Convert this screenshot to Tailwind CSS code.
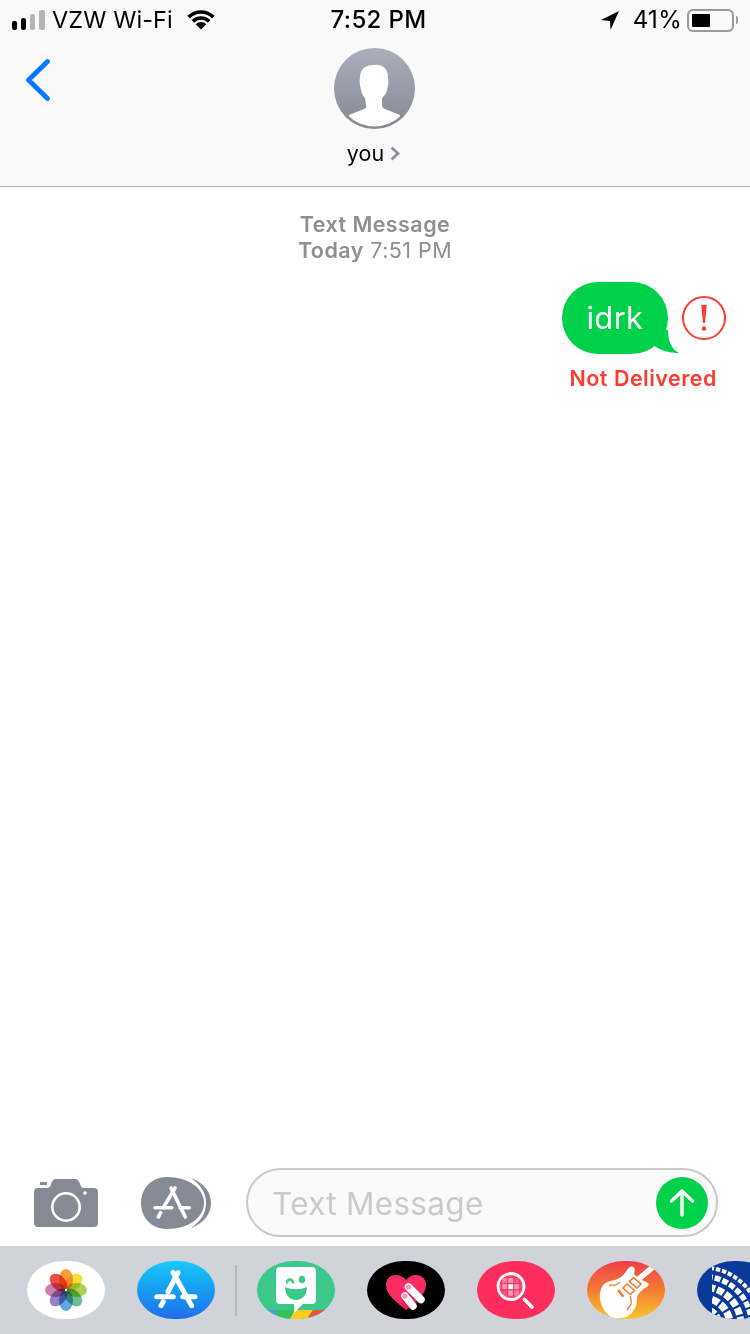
<!DOCTYPE html>
<html>
<head>
<meta charset="utf-8">
<script src="https://cdn.jsdelivr.net/npm/@tailwindcss/browser@4"></script>
</head>
<body class="bg-white">
<div class="w-[750px] h-[1334px] overflow-hidden flex flex-col bg-white [font-family:Inter,sans-serif]">

  <!-- Nav header -->
  <header class="h-[187px] shrink-0 bg-[#f9f9f9] border-b border-[#b2b2b2] flex flex-col">
    <div class="h-[40px] shrink-0 grid grid-cols-[1fr_auto_1fr] items-center text-black">
      <div class="flex items-center pl-[12px] h-[40px]">
        <div class="flex items-end gap-[4px] h-[20px]">
          <span class="w-[5px] h-[9px] rounded-[2px] bg-black"></span>
          <span class="w-[5px] h-[12px] rounded-[2px] bg-black"></span>
          <span class="w-[5px] h-[16px] rounded-[2px] bg-[#b4b4b4]"></span>
          <span class="w-[6px] h-[20px] rounded-[2px] bg-[#b4b4b4]"></span>
        </div>
        <span class="ml-[7px] text-[23.5px] leading-[40px] tracking-[0.1px]">VZW Wi-Fi</span>
        <svg class="ml-[14px]" width="28" height="20" viewBox="0 0 28 20"><path d="M14 19.500 L8.700 14.200 A7.500 7.500 0 0 1 19.300 14.200 Z" fill="#000"/><path d="M5.870 11.370 A11.500 11.500 0 0 1 22.130 11.370" fill="none" stroke="#000" stroke-width="3.600"/><path d="M1.630 7.130 A17.500 17.500 0 0 1 26.370 7.130" fill="none" stroke="#000" stroke-width="3.600"/></svg>
      </div>
      <div class="ml-[7px] text-[24px] leading-[40px] font-medium tracking-[0.35px] whitespace-nowrap">7:52 PM</div>
      <div class="flex items-center justify-end pr-[12px] h-[40px]">
        <svg width="18" height="19" viewBox="0 0 18 19"><path d="M18 0 L0 9 L9 10 L9.500 19 Z" fill="#000"/></svg>
        <span class="ml-[14px] text-[24px] leading-[40px] tracking-[0.3px]">41%</span>
        <div class="ml-[5px] w-[47px] h-[23px] border-2 border-[#9a9a9a] rounded-[6px] p-[3px]">
          <div class="w-[18px] h-full bg-black rounded-[1px]"></div>
        </div>
        <div class="ml-[2px] w-[2px] h-[8px] bg-[#9a9a9a] rounded-r-[2px]"></div>
      </div>
    </div>
    <div class="relative flex flex-col items-center pt-[8px]">
      <svg class="absolute left-[24px] top-[17px]" width="28" height="46" viewBox="0 0 28 46"><path d="M23.500 4.500 L4.500 23 L23.500 41.500" fill="none" stroke="#007aff" stroke-width="4.800" stroke-linecap="round" stroke-linejoin="round"/></svg>
      <svg class="mr-[1px]" width="81" height="81" viewBox="0 0 81 81">
        <defs>
          <linearGradient id="av" x1="0" y1="0" x2="0" y2="1"><stop offset="0" stop-color="#abafbc"/><stop offset="1" stop-color="#858994"/></linearGradient>
          <clipPath id="avc"><circle cx="40.500" cy="40.500" r="38"/></clipPath>
        </defs>
        <circle cx="40.500" cy="40.500" r="40.500" fill="url(#av)"/>
        <path clip-path="url(#avc)" d="M40 17 C49 16 54 21 54 30 C55 33 54 38 53 42 C52 46 50 48 48 50 L48 57 C48 59 49 60 51 61 C56 63 61 65 66 67 L67 81 L14 81 L15 67 C20 65 25 63 30 61 C32 60 33 59 32 57 L31 50 C29 48 28 46 27 42 C26 38 25 33 26 30 C26 21 31 17 40 17 Z" fill="#fff"/>
      </svg>
      <div class="flex items-center mt-[8px] h-[32px] mr-[3px]">
        <span class="text-[21.5px] leading-[32px] text-black">you</span>
        <svg class="ml-[6px] mt-[1px]" width="10" height="15" viewBox="0 0 10 15"><path d="M1.500 1.500 L8 7.500 L1.500 13.500" fill="none" stroke="#8a8f99" stroke-width="2.600"/></svg>
      </div>
    </div>
  </header>

  <!-- Conversation -->
  <main class="flex-1 min-h-0 flex flex-col">
    <div class="pt-[24px] flex flex-col items-center text-[#8e8e93] text-[21.5px] leading-[26px] tracking-[0.45px]">
      <div class="font-semibold">Text Message</div>
      <div><span class="font-semibold">Today</span> <span class="font-normal">7:51 PM</span></div>
    </div>
    <div class="mt-[19px] flex flex-col items-end">
      <div class="flex items-center pr-[24px]">
        <div class="relative w-[106px] h-[72px] rounded-[36px] bg-[#00d14a] flex items-center justify-center">
          <svg class="absolute left-[80px] top-[40px]" width="38" height="32" viewBox="0 0 38 32"><path d="M10 8 L26 8 C26 18 29 27 37 31 C29 31 20 29 13 24.500 Z" fill="#00d14a"/></svg>
          <span class="relative text-white text-[31px] leading-[72px] tracking-[0.3px]">idrk</span>
        </div>
        <div class="ml-[14px] w-[44px] h-[44px] rounded-full border-2 border-[#ff3b30] flex items-center justify-center">
          <svg width="8" height="26" viewBox="0 0 8 26"><path d="M1.200 0 L6.800 0 L5 18 L3 18 Z" fill="#ff3b30"/><circle cx="4" cy="23.500" r="2.200" fill="#ff3b30"/></svg>
        </div>
      </div>
      <div class="mt-[11px] pr-[33px] text-[#ff3b30] text-[21.5px] leading-[26px] font-semibold tracking-[0.5px]">Not Delivered</div>
    </div>
  </main>

  <!-- Compose bar -->
  <div class="h-[78px] shrink-0 flex items-center pl-[34px] pr-[32px] pb-[9px]">
    <svg width="64" height="48" viewBox="0 0 64 48">
      <path d="M6 3 L13 3 L13 6 L6 6 Z" fill="#858b94"/>
      <path d="M4 9 L13 9 C15 9 16 8 17 5 C18 2 19 0 22 0 L41 0 C44 0 45 2 46 5 C47 8 48 9 50 9 L60 9 C62.500 9 64 10.500 64 13 L64 44 C64 46.500 62.500 48 60 48 L4 48 C1.500 48 0 46.500 0 44 L0 13 C0 10.500 1.500 9 4 9 Z" fill="#858b94"/>
      <circle cx="32" cy="28" r="13.700" fill="none" stroke="#fff" stroke-width="2.600"/>
      <circle cx="51" cy="14" r="1.800" fill="#fff"/>
    </svg>
    <svg class="ml-[43px]" width="70" height="52" viewBox="0 0 70 52">
      <path d="M26 0 C48 0 63 12 63 26 C63 40 48 52 26 52 C10 52 0 40 0 26 C0 12 10 0 26 0 Z" fill="#858b94"/>
      <path d="M50 1 C63 6 70 15 70 26 C70 37 63 46 50 51 C60 44 65 36 65 26 C65 16 60 8 50 1 Z" fill="#858b94"/>
      <g fill="none" stroke="#fff" stroke-width="3.600" stroke-linecap="round">
        <path d="M30 11 L44.300 40"/>
        <path d="M34 11 L22.300 30.700"/>
        <path d="M14 30.700 L30.700 30.700"/>
        <path d="M39 30.700 L48.300 30.700"/>
        <path d="M19.700 35.700 L17.300 40"/>
      </g>
    </svg>
    <div class="ml-[35px] w-[472px] h-[69px] rounded-[35px] border-2 border-[#c8c8cc] bg-[#fafafa] flex items-center justify-between pl-[24px] pr-[8px]">
      <span class="pt-[1px] text-[31.5px] leading-[65px] tracking-[0.3px] text-[#c9c9ce]">Text Message</span>
      <div class="w-[52px] h-[52px] rounded-full bg-[#00d14a] flex items-center justify-center">
        <svg width="26" height="28" viewBox="0 0 26 28"><path d="M13 26 L13 2 M2.500 12 L13 2 L23.500 12" fill="none" stroke="#fff" stroke-width="3.400" stroke-linecap="round" stroke-linejoin="round"/></svg>
      </div>
    </div>
  </div>

  <!-- App tray -->
  <div class="h-[88px] shrink-0 bg-[#d0d3da] flex items-center pl-[27px] gap-[32px] overflow-hidden">
    <!-- Photos -->
    <div class="w-[78px] h-[58px] shrink-0 rounded-[37px/29px] bg-white flex items-center justify-center">
      <svg width="42" height="42" viewBox="-21 -21 42 42">
        <g opacity="0.92">
          <ellipse class="mix-blend-multiply" cx="0" cy="-10.500" rx="7" ry="10.500" fill="#f89a2c"/>
          <ellipse class="mix-blend-multiply" cx="0" cy="-10.500" rx="7" ry="10.500" fill="#f5dc25" transform="rotate(45)"/>
          <ellipse class="mix-blend-multiply" cx="0" cy="-10.500" rx="7" ry="10.500" fill="#a6cf44" transform="rotate(90)"/>
          <ellipse class="mix-blend-multiply" cx="0" cy="-10.500" rx="7" ry="10.500" fill="#62b98b" transform="rotate(135)"/>
          <ellipse class="mix-blend-multiply" cx="0" cy="-10.500" rx="7" ry="10.500" fill="#4fa3dd" transform="rotate(180)"/>
          <ellipse class="mix-blend-multiply" cx="0" cy="-10.500" rx="7" ry="10.500" fill="#8d79c0" transform="rotate(225)"/>
          <ellipse class="mix-blend-multiply" cx="0" cy="-10.500" rx="7" ry="10.500" fill="#c776ae" transform="rotate(270)"/>
          <ellipse class="mix-blend-multiply" cx="0" cy="-10.500" rx="7" ry="10.500" fill="#ee3f36" transform="rotate(315)"/>
        </g>
        <circle r="1.200" fill="#fff"/>
      </svg>
    </div>
    <!-- App Store -->
    <div class="w-[78px] h-[58px] shrink-0 rounded-[37px/29px] bg-gradient-to-b from-[#1cc8fb] to-[#1f6eea]">
      <svg width="78" height="58" viewBox="0 0 78 58">
        <g fill="none" stroke="#fff" stroke-width="5" stroke-linecap="round">
          <path d="M36 11.500 L54.700 44.700"/>
          <path d="M41 11.500 L31 31"/>
          <path d="M19.700 35.700 L36.300 35.700"/>
          <path d="M45.700 35.700 L58 35.700"/>
          <path d="M26.300 40.700 L24 44.700"/>
        </g>
      </svg>
    </div>
    <div class="w-[2px] h-[51px] shrink-0 -mx-[12px] bg-[#b3b6bc]"></div>
    <!-- Bitmoji -->
    <div class="w-[78px] h-[58px] shrink-0 rounded-[37px/29px] bg-[#3ac98a] overflow-hidden">
      <svg width="78" height="58" viewBox="0 0 78 58">
        <path d="M4 49 L21 49 L16 58 L8 58 Z" fill="#4a9bdd"/>
        <path d="M21 49 L38 49 L33 58 L16 58 Z" fill="#35c05a"/>
        <path d="M38 49 L56 49 L50 58 L33 58 Z" fill="#fdcc1c"/>
        <path d="M56 49 L71 49 L62 58 L50 58 Z" fill="#e8543f"/>
        <path d="M23 6 L55 6 C58 6 59 8 59 11 L59 38 C59 41 58 43 55 43 L46 43 L37 52 L37 43 L23 43 C20 43 19 41 19 38 L19 11 C19 8 20 6 23 6 Z" fill="#fff"/>
        <path d="M30 21.500 C30.500 17.500 35 17.500 36 21.500" fill="none" stroke="#3ac98a" stroke-width="2.400" stroke-linecap="round"/>
        <ellipse cx="45" cy="18.500" rx="3.200" ry="3.800" fill="#3ac98a"/>
        <path d="M28 26 C34 29 44 29 50 26 C50 34 45 39 39 39 C33 39 28 34 28 26 Z" fill="#3ac98a"/>
      </svg>
    </div>
    <!-- Heart -->
    <div class="w-[78px] h-[58px] shrink-0 rounded-[37px/29px] bg-black">
      <svg width="78" height="58" viewBox="0 0 78 58">
        <path d="M39 49 C28 40 19 33 19 24 C19 17 24 14 29 14 C33 14 37 16 39 19 C41 16 45 14 49 14 C54 14 59 17 59 24 C59 33 50 40 39 49 Z" fill="#fc2d64"/>
        <path d="M44 30 L56 37 C52 42 46 46 39 49 L34 43 Z" fill="#c81d4d" opacity="0.600"/>
        <path d="M41.500 26 L54 38.500" stroke="#fff" stroke-width="7.500" stroke-linecap="round"/>
        <path d="M38 35 L46 45" stroke="#fff" stroke-width="7.500" stroke-linecap="round"/>
        <circle cx="41.500" cy="26" r="2.600" fill="#fa9ab8"/>
        <circle cx="38" cy="35" r="2.600" fill="#fa9ab8"/>
      </svg>
    </div>
    <!-- Search -->
    <div class="w-[78px] h-[58px] shrink-0 rounded-[37px/29px] bg-[#fd2d5c]">
      <svg width="78" height="58" viewBox="0 0 78 58">
        <defs><clipPath id="lens"><circle cx="34" cy="25.500" r="12"/></clipPath></defs>
        <circle cx="34" cy="25.500" r="12" fill="#f7557f"/>
        <g clip-path="url(#lens)">
          <rect x="25" y="23" width="5.500" height="5.500" fill="#fc9ab2"/>
          <rect x="31" y="17" width="5.500" height="5.500" fill="#fc9ab2"/>
          <rect x="37" y="23" width="5.500" height="5.500" fill="#fc9ab2"/>
          <rect x="31" y="29" width="5.500" height="5.500" fill="#fc9ab2"/>
          <rect x="37" y="29" width="5.500" height="5.500" fill="#fb7c9c"/>
          <rect x="25" y="17" width="5.500" height="5.500" fill="#fb7c9c"/>
          <rect x="31" y="23" width="5.500" height="5.500" fill="#fff"/>
          <path d="M18 16.500 L50 16.500 M18 22.700 L50 22.700 M18 28.800 L50 28.800 M24.700 8 L24.700 42 M30.800 8 L30.800 42 M36.800 8 L36.800 42 M42.800 8 L42.800 42" stroke="#fd2d5c" stroke-width="1"/>
        </g>
        <circle cx="34" cy="25.500" r="13" fill="none" stroke="#fff" stroke-width="2.800"/>
        <path d="M47.500 38.500 L55 46" stroke="#fff" stroke-width="3.600" stroke-linecap="round"/>
      </svg>
    </div>
    <!-- GarageBand -->
    <div class="w-[78px] h-[58px] shrink-0 rounded-[37px/29px] bg-gradient-to-b from-[#f03a47] via-[#f37a30] to-[#fbc52c] overflow-hidden">
      <svg width="78" height="58" viewBox="0 0 78 58">
        <path d="M41.300 7.300 C43 5.500 45 5 46.500 6 C48 7.500 48 10 47 13 L50 15.700 L64.700 3.300 L69 7.300 L54.700 19 C57 20 60 21 61.300 22.300 C62 24 61.500 25 59 26.500 C56 28 54 30 52 32.500 C50 35 50 37 49.700 40 C49.500 44 49 46 48 47.300 C46 51 43 54 39.700 55.700 C35 57.500 30 57.500 26.300 57 C21 55 17 50 14.700 44 C13 40 12.500 36 13 32.300 C14 27 15.500 24 18 22.300 C21 20 25 20 28 19 C31 18 34 16 36.300 14 C38 12 40 9 41.300 7.300 Z" fill="#fff"/>
        <path d="M46.500 16.500 L54 23 L50 27 L42.500 20.500 Z M40 23 L47.500 29.500 L43.500 33.500 L36 27 Z" fill="none" stroke="#f37a30" stroke-width="1.600"/>
        <path d="M31.300 29 L36.300 35.700" stroke="#f37a30" stroke-width="2.600" fill="none"/>
        <path d="M22 25 C25 22 27 26 29.500 23.500 C31 22 32 22 33 21" stroke="#f37a30" stroke-width="1.300" fill="none"/>
        <path d="M43 35 C44 38 45 41 44 43 C43 46 41 46 40 49" stroke="#f37a30" stroke-width="1.300" fill="none"/>
      </svg>
    </div>
    <!-- United -->
    <div class="w-[78px] h-[58px] shrink-0 rounded-[37px/29px] bg-[#0b3a9a] overflow-hidden">
      <svg width="78" height="58" viewBox="0 0 78 58">
        <defs><clipPath id="globe"><rect x="15" y="2" width="63" height="56"/></clipPath></defs>
        <g clip-path="url(#globe)" fill="none" stroke="#fff">
          <circle cx="6" cy="64" r="16" stroke-width="7" stroke-dasharray="7 2"/>
          <circle cx="6" cy="64" r="27" stroke-width="7.500" stroke-dasharray="7.500 2.200"/>
          <circle cx="6" cy="64" r="38" stroke-width="7" stroke-dasharray="7 2.200"/>
          <circle cx="6" cy="64" r="48.500" stroke-width="5.500" stroke-dasharray="6 2"/>
          <circle cx="6" cy="64" r="57.500" stroke-width="4" stroke-dasharray="4.500 1.800"/>
        </g>
      </svg>
    </div>
  </div>
</div>
</body>
</html>
